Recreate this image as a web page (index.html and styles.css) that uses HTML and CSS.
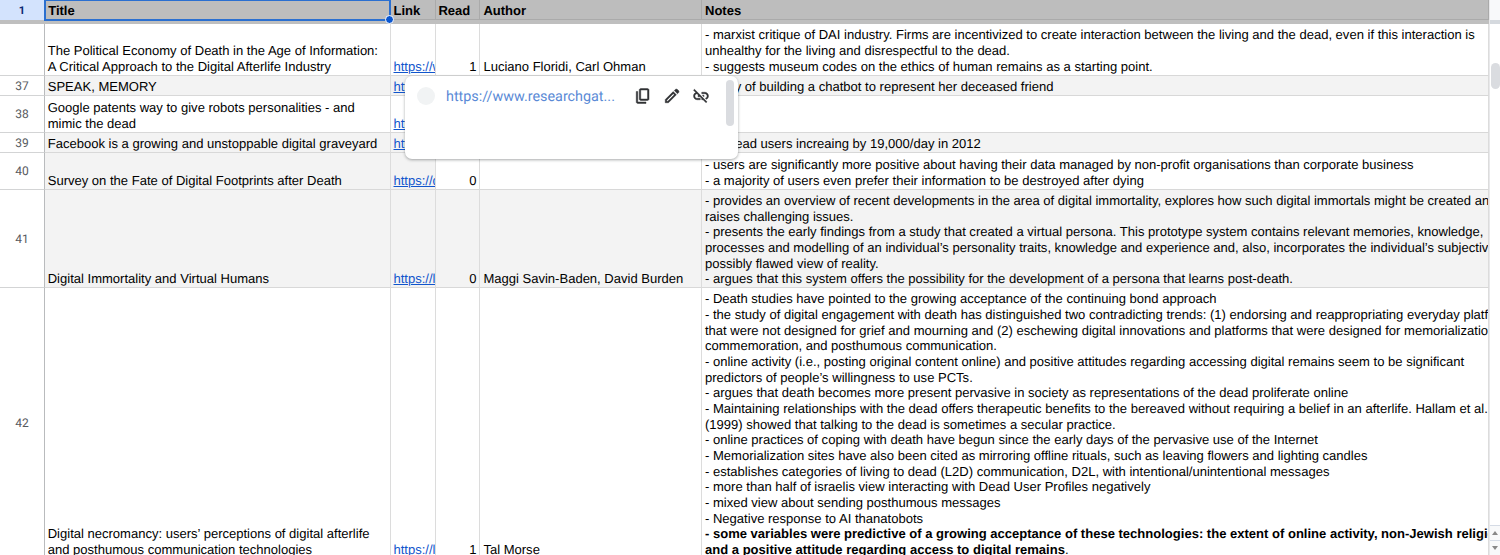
FILE: index.html
```
<!DOCTYPE html>
<html lang="en">
<head>
<meta charset="utf-8">
<title>Reading list</title>
<link rel="stylesheet" href="styles.css">
</head>
<body>
<div class="app">
  <main class="sheet">
    <div class="row header">
      <div class="num">1</div>
      <div class="cell selected">Title<span class="handle"></span></div>
      <div class="cell">Link</div>
      <div class="cell">Read</div>
      <div class="cell">Author</div>
      <div class="cell">Notes</div>
    </div>
    <div class="freeze"></div>
    <div class="row r36">
      <div class="num"></div>
      <div class="cell">The Political Economy of Death in the Age of Information:<br>A Critical Approach to the Digital Afterlife Industry</div>
      <div class="cell link"><a>https://w</a></div>
      <div class="cell read">1</div>
      <div class="cell">Luciano Floridi, Carl Ohman</div>
      <div class="cell">- marxist critique of DAI industry. Firms are incentivized to create interaction between the living and the dead, even if this interaction is<br>unhealthy for the living and disrespectful to the dead.<br>- suggests museum codes on the ethics of human remains as a starting point.</div>
    </div>
    <div class="row r37 band">
      <div class="num">37</div>
      <div class="cell">SPEAK, MEMORY</div>
      <div class="cell link"><a>https://</a></div>
      <div class="cell read"></div>
      <div class="cell"></div>
      <div class="cell">- story of building a chatbot to represent her deceased friend</div>
    </div>
    <div class="row r38">
      <div class="num">38</div>
      <div class="cell">Google patents way to give robots personalities - and<br>mimic the dead</div>
      <div class="cell link"><a>https://</a></div>
      <div class="cell read"></div>
      <div class="cell"></div>
      <div class="cell"></div>
    </div>
    <div class="row r39 band">
      <div class="num">39</div>
      <div class="cell">Facebook is a growing and unstoppable digital graveyard</div>
      <div class="cell link"><a>https://</a></div>
      <div class="cell read"></div>
      <div class="cell"></div>
      <div class="cell"><span class="dead">- dead users increaing by 19,000/day in 2012</span></div>
    </div>
    <div class="row r40">
      <div class="num">40</div>
      <div class="cell shaded">Survey on the Fate of Digital Footprints after Death</div>
      <div class="cell link shaded"><a>https://d</a></div>
      <div class="cell read">0</div>
      <div class="cell"></div>
      <div class="cell">- users are significantly more positive about having their data managed by non-profit organisations than corporate business<br>- a majority of users even prefer their information to be destroyed after dying</div>
    </div>
    <div class="row r41 band">
      <div class="num">41</div>
      <div class="cell">Digital Immortality and Virtual Humans</div>
      <div class="cell link"><a>https://l</a></div>
      <div class="cell read">0</div>
      <div class="cell">Maggi Savin-Baden, David Burden</div>
      <div class="cell">- provides an overview of recent developments in the area of digital immortality, explores how such digital immortals might be created an<br>raises challenging issues.<br>- presents the early findings from a study that created a virtual persona. This prototype system contains relevant memories, knowledge,<br>processes and modelling of an individual’s personality traits, knowledge and experience and, also, incorporates the individual’s subjectiv<br>possibly flawed view of reality.<br>- argues that this system offers the possibility for the development of a persona that learns post-death.</div>
    </div>
    <div class="row r42">
      <div class="num">42</div>
      <div class="cell">Digital necromancy: users’ perceptions of digital afterlife<br>and posthumous communication technologies</div>
      <div class="cell link"><a>https://l</a></div>
      <div class="cell read">1</div>
      <div class="cell">Tal Morse</div>
      <div class="cell">- Death studies have pointed to the growing acceptance of the continuing bond approach<br>- the study of digital engagement with death has distinguished two contradicting trends: (1) endorsing and reappropriating everyday platfo<br>that were not designed for grief and mourning and (2) eschewing digital innovations and platforms that were designed for memorializatio<br>commemoration, and posthumous communication.<br>- online activity (i.e., posting original content online) and positive attitudes regarding accessing digital remains seem to be significant<br>predictors of people’s willingness to use PCTs.<br>- argues that death becomes more present pervasive in society as representations of the dead proliferate online<br>- Maintaining relationships with the dead offers therapeutic benefits to the bereaved without requiring a belief in an afterlife. Hallam et al.<br>(1999) showed that talking to the dead is sometimes a secular practice.<br>- online practices of coping with death have begun since the early days of the pervasive use of the Internet<br>- Memorialization sites have also been cited as mirroring offline rituals, such as leaving flowers and lighting candles<br>- establishes categories of living to dead (L2D) communication, D2L, with intentional/unintentional messages<br>- more than half of israelis view interacting with Dead User Profiles negatively<br>- mixed view about sending posthumous messages<br>- Negative response to AI thanatobots<br><b>- some variables were predictive of a growing acceptance of these technologies: the extent of online activity, non-Jewish religio</b><br><b>and a positive attitude regarding access to digital remains</b>.</div>
    </div>
  </main>
  <aside class="scrollbar">
    <div class="corner"></div>
    <div class="thumb"></div>
    <div class="steps">
      <div class="step"><i class="up"></i></div>
      <div class="step"><i class="down"></i></div>
    </div>
  </aside>
  <div class="popup">
    <span class="favicon"></span>
    <span class="url">https://www.researchgat...</span>
    <svg class="icon" viewBox="0 0 24 24"><path d="M9 18q-.825 0-1.412-.587T7 16V4q0-.825.588-1.412T9 2h9q.825 0 1.413.588T20 4v12q0 .825-.587 1.413T18 18zm0-2h9V4H9zm-4 6q-.825 0-1.412-.587T3 20V6h2v14h11v2z"/></svg>
    <svg class="icon" viewBox="0 0 24 24"><path d="M5 19h1.4l8.625-8.625-1.4-1.4L5 17.6zM19.3 8.925l-4.25-4.2 1.4-1.4q.575-.575 1.413-.575t1.412.575l1.4 1.4q.575.575.6 1.388t-.55 1.387zM17.85 10.4 7.25 21H3v-4.25l10.6-10.6z"/></svg>
    <svg class="icon" viewBox="0 0 24 24"><path d="M17 7h-4v1.9h4c1.71 0 3.1 1.39 3.1 3.1 0 1.43-.98 2.63-2.31 2.98l1.46 1.46C20.88 15.61 22 13.95 22 12c0-2.76-2.24-5-5-5zm-1 4h-2.190l2 2H16zM2 4.270l3.110 3.110C3.290 8.120 2 9.910 2 12c0 2.760 2.240 5 5 5h4v-1.900H7c-1.710 0-3.100-1.390-3.100-3.100 0-1.590 1.210-2.900 2.760-3.070L8.730 11H8v2h2.730L13 15.270V17h1.730l4.010 4L20 19.740 3.270 3z"/></svg>
    <span class="popup-thumb"></span>
  </div>
</div>
</body>
</html>
```
FILE: styles.css
```
body {
  margin: 0;
  background: #fff;
  color: #000;
  font-family: "Liberation Sans", Arial, sans-serif;
  font-size: 13.04px;
  line-height: 15.65px;
  text-rendering: geometricPrecision;
}

.app {
  position: relative;
  display: flex;
  width: 1500px;
  height: 555px;
  overflow: hidden;
}

.sheet {
  width: 1489px;
  flex: none;
  overflow: hidden;
}

.row {
  display: grid;
  grid-template-columns: 45px 346px 45px 44px 222px 787px;
}

.num {
  display: flex;
  align-items: center;
  justify-content: center;
  box-sizing: border-box;
  border-right: 1px solid #b9bbbd;
  border-bottom: 1px solid #d3d4d5;
  font: 12px Roboto, sans-serif;
  color: #575a5e;
}

.cell {
  display: flow-root;
  align-content: end;
  box-sizing: border-box;
  padding: 0 3px 0.6px 3.4px;
  border-right: 1px solid #dcdcdc;
  border-bottom: 1px solid #d8d8d8;
  white-space: nowrap;
  overflow: hidden;
}

.row > .cell:nth-child(2) { padding-left: 2.7px; }
.row > .cell:nth-child(4) { padding-left: 2.4px; }
.row > .cell:last-child { padding-left: 3px; }
.row > .link { padding-right: 0; padding-left: 2.5px; }
.header .cell:nth-child(3) { padding-left: 2.5px; }
.read { padding-right: 2.5px; text-align: right; }
.link a { color: #1155cc; text-decoration: underline; }
.band .cell, .shaded { background: #f3f3f3; }
.dead { margin-left: 15px; }

.header { height: 20px; }
.header .num { background: #d3e3fd; color: #0b2a72; font-weight: 700; font-size: 11px; border-bottom: 0; }
.header .cell { background: #bdbdbd; font-weight: 700; padding-bottom: 0.5px; border-color: #aaa; }

.row > .selected.cell {
  position: relative;
  z-index: 2;
  overflow: visible;
  border: 2px solid #2a6fd0;
  border-top-width: 1px;
  margin: 0 0 -1px -1px;
  padding-bottom: 0.3px;
  padding-left: 2.2px;
}

.handle {
  position: absolute;
  right: -5px;
  bottom: -5px;
  width: 7px;
  height: 7px;
  border: 1px solid #fff;
  border-radius: 50%;
  background: #0b57d0;
}

.freeze { height: 4px; background: #bfbfbf; }

.r36 { height: 52px; }
.r37 { height: 20px; }
.r38 { height: 37px; }
.r39 { height: 20px; }
.r40 { height: 37px; }
.r41 { height: 98px; }
.r42 { height: 271px; }
.row.r37 .cell, .row.r39 .cell { padding-bottom: 0; }
.row.r41 .cell { padding-bottom: 0.1px; }
.row.r42 .cell { padding-bottom: 0.4px; }

.scrollbar {
  display: flex;
  flex-direction: column;
  width: 11px;
  box-sizing: border-box;
  border-left: 1px solid #e8e8ea;
  background: #fff;
}

.corner { height: 20px; background: #f8f9fa; border-bottom: 4px solid #d5d9de; }
.thumb { width: 9px; height: 26px; margin: 39px 0 0 1px; border-radius: 5px; background: #dadce0; }

.steps { margin-top: auto; background: #f8f9fa; }
.step { display: flex; height: 14px; align-items: center; justify-content: center; border-top: 1px solid #d5dbe5; }
.up, .down { border: 3px solid transparent; }
.up { border-bottom: 4px solid #888; border-top: 0; }
.down { border-top: 4px solid #888; border-bottom: 0; }

.popup {
  position: absolute;
  left: 405px;
  top: 76px;
  z-index: 3;
  display: flex;
  align-items: flex-start;
  width: 333px;
  height: 83px;
  box-sizing: border-box;
  padding: 11px 4px 0 12px;
  border-radius: 7px;
  background: #fff;
  box-shadow: 0 1px 3px rgba(60, 64, 67, 0.45);
}

.favicon { width: 18px; height: 18px; margin-right: 11px; border-radius: 50%; background: #f1f3f4; }
.url { width: 188px; font: 14.35px/20px Roboto, sans-serif; color: #5a8ad6; }
.icon { width: 18px; height: 18px; margin-right: 11px; fill: #303134; stroke: #303134; stroke-width: 0.6; }
.popup-thumb { width: 8px; height: 46px; margin: -7px 0 0 auto; border-radius: 4px; background: #dadce0; }
```
